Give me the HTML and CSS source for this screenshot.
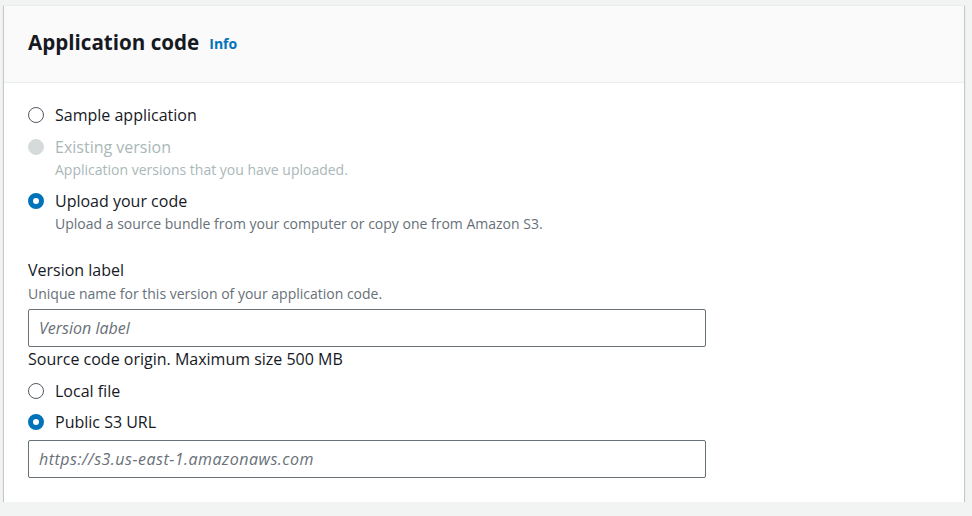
FILE: index.html
```html
<!DOCTYPE html>
<html>
<head>
<meta charset="utf-8">
<link rel="stylesheet" href="styles.css">
</head>
<body>
<div class="page">
  <section class="container">
    <header class="header">
      <h2 class="title">Application code</h2>
      <a class="info" href="#">Info</a>
    </header>
    <div class="content">
      <div class="radio-group">
        <label class="radio">
          <span class="dot"></span>
          <span class="radio-text"><span class="radio-label">Sample application</span></span>
        </label>
        <label class="radio disabled">
          <span class="dot"></span>
          <span class="radio-text"><span class="radio-label">Existing version</span><span class="radio-desc">Application versions that you have uploaded.</span></span>
        </label>
        <label class="radio checked">
          <span class="dot"></span>
          <span class="radio-text"><span class="radio-label">Upload your code</span><span class="radio-desc">Upload a source bundle from your computer or copy one from Amazon S3.</span></span>
        </label>
      </div>

      <div class="field">
        <div class="field-label">Version label</div>
        <div class="field-desc">Unique name for this version of your application code.</div>
        <div class="input"><span class="placeholder">Version label</span></div>
      </div>

      <div class="origin">Source code origin. Maximum size 500 MB</div>
      <div class="radio-group small">
        <label class="radio">
          <span class="dot"></span>
          <span class="radio-text"><span class="radio-label">Local file</span></span>
        </label>
        <label class="radio checked">
          <span class="dot"></span>
          <span class="radio-text"><span class="radio-label">Public S3 URL</span></span>
        </label>
      </div>
      <div class="input url"><span class="placeholder">https://s3.us-east-1.amazonaws.com</span></div>
    </div>
  </section>
</div>
</body>
</html>
```

FILE: styles.css
```css
html, body {
  margin: 0;
  padding: 0;
  background: #f2f3f3;
  font-family: "Open Sans", "Liberation Sans", Arial, sans-serif;
  color: #16191f;
}
.page {
  padding: 5px 8px 0 4px;
}
.container {
  width: 960px;
  background: #ffffff;
  box-shadow: 0 1px 1px 0 rgba(0,28,36,0.3), 1px 1px 1px 0 rgba(0,28,36,0.15), -1px 1px 1px 0 rgba(0,28,36,0.15);
  border-top: 1px solid #eaeded;
}
.header {
  background: #fafafa;
  border-bottom: 1px solid #eaeded;
  height: 77px;
  box-sizing: border-box;
  display: flex;
  align-items: center;
  padding: 0 24px 5px 24px;
  gap: 10px;
}
.title {
  margin: 0;
  font-size: 20.6px;
  font-weight: 700;
  color: #16191f;
  line-height: 24px;
}
.info {
  color: #0073bb;
  font-size: 14px;
  font-weight: 700;
  text-decoration: none;
  margin-top: 3px;
}
.content {
  padding: 20px 24px 24px 24px;
}
.radio-group {
  display: flex;
  flex-direction: column;
  gap: 8px;
}
.radio {
  display: flex;
  gap: 11px;
  align-items: flex-start;
}
.dot {
  flex: none;
  width: 14px;
  height: 14px;
  border: 1px solid #545b64;
  border-radius: 50%;
  margin-top: 4px;
  box-sizing: content-box;
}
.radio.checked .dot {
  width: 6px;
  height: 6px;
  border: 5px solid #0073bb;
}
.radio.disabled .dot {
  background: #d5dbdb;
  border-color: #d5dbdb;
}
.radio-text {
  display: flex;
  flex-direction: column;
}
.radio-label {
  font-size: 16px;
  line-height: 24px;
}
.radio.disabled .radio-label,
.radio.disabled .radio-desc {
  color: #aab7b8;
}
.radio-desc {
  font-size: 14px;
  line-height: 22px;
  color: #687078;
}
.field {
  margin-top: 23px;
}
.field-label {
  font-size: 16px;
  line-height: 24px;
}
.field-desc {
  font-size: 14px;
  line-height: 22px;
  padding-top: 1px;
  color: #687078;
}
.input {
  width: 656px;
  height: 36px;
  border: 1px solid #687078;
  border-radius: 2px;
  margin-top: 4px;
  display: flex;
  align-items: center;
  padding: 0 10px;
}
.placeholder {
  font-style: italic;
  color: #687078;
  font-size: 16px;
}
.url .placeholder {
  letter-spacing: 0.5px;
}
.origin {
  font-size: 16px;
  line-height: 24px;
}
.radio-group.small {
  margin-top: 8px;
  gap: 7px;
}
.input.url {
  margin-top: 6px;
}
```
